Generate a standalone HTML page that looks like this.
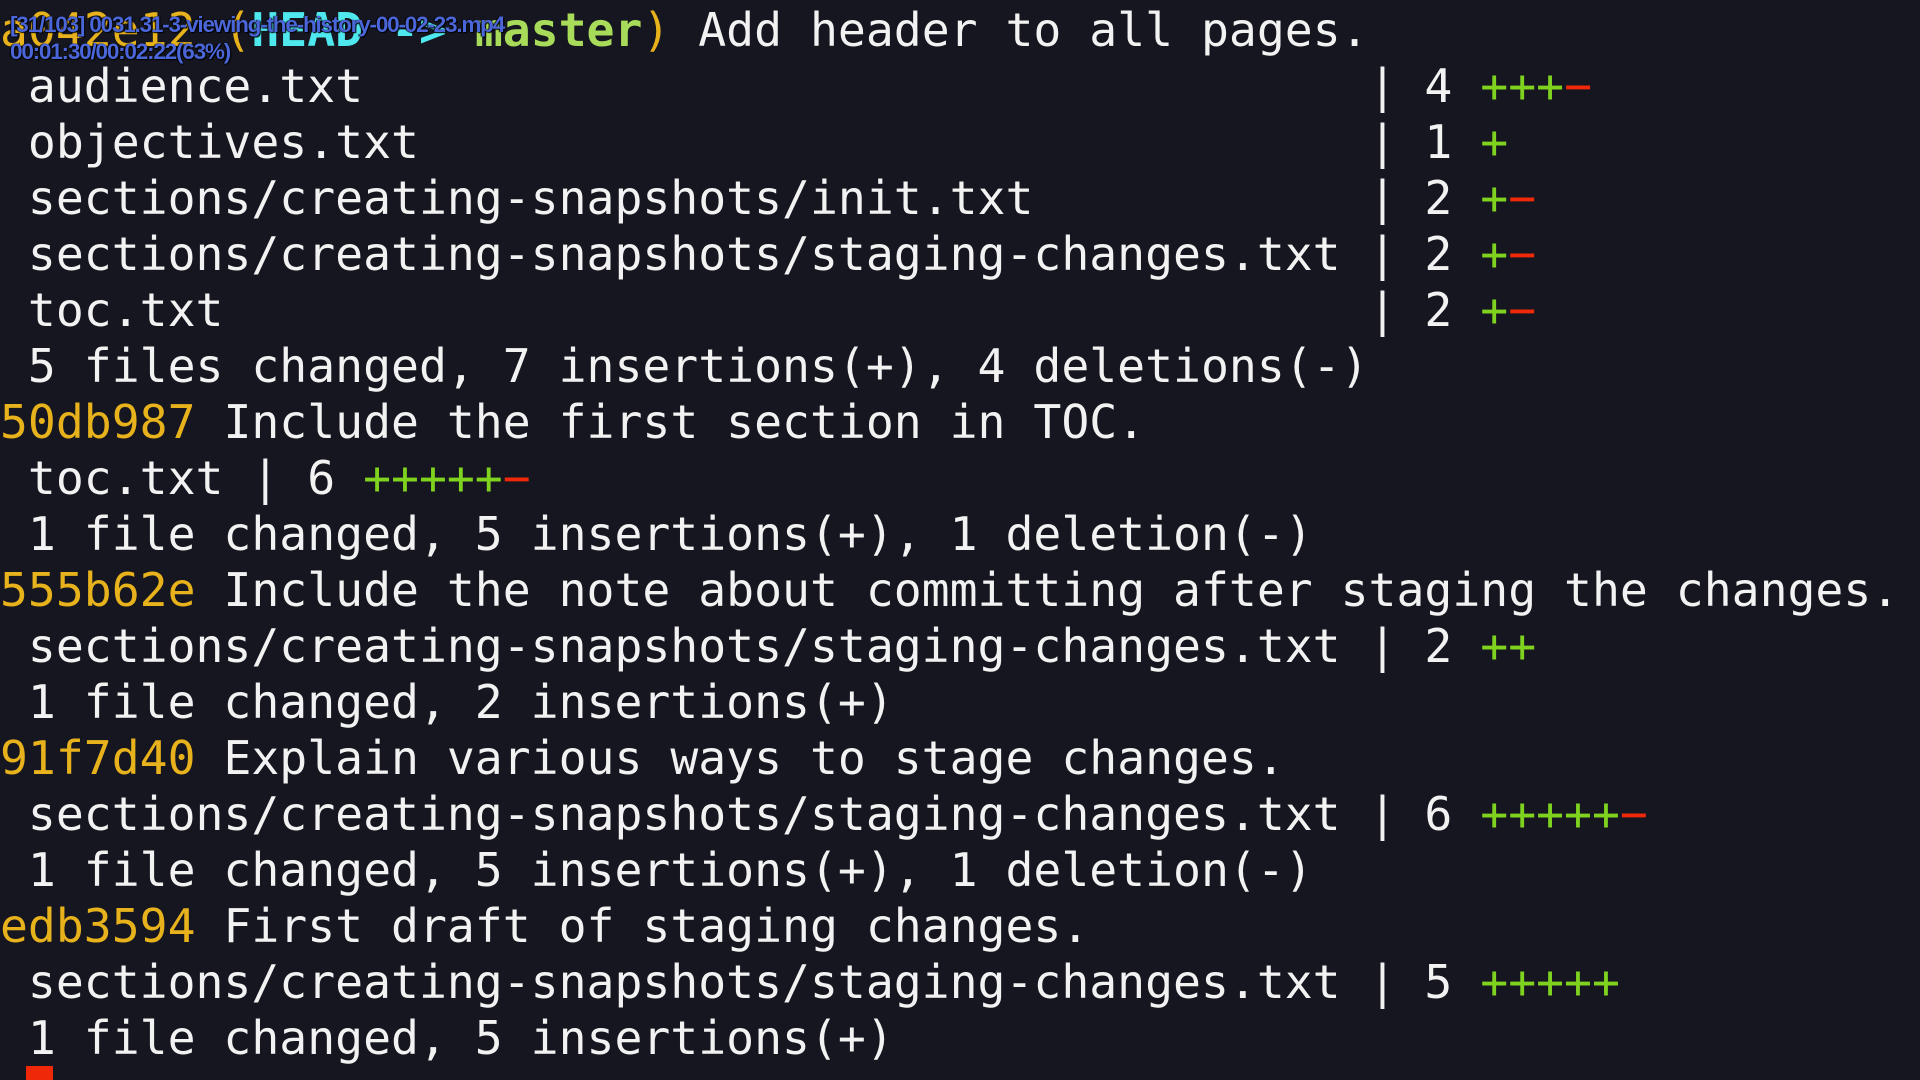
<!DOCTYPE html>
<html><head><meta charset="utf-8"><style>
html,body{margin:0;padding:0;background:#15161f;width:1920px;height:1080px;overflow:hidden}
pre{position:absolute;left:0;top:2px;margin:0;font-family:"DejaVu Sans Mono","Liberation Mono",monospace;font-size:46.4px;line-height:56px;color:#f2f2f2}
.y{color:#e7b21c}.c{color:#4fe8ee;font-weight:bold}.gb{color:#a8db5a;font-weight:bold}.r{color:#f0280a}.p{color:#7fd31e}
.ov{position:absolute;left:10px;font-family:"Liberation Sans",sans-serif;font-size:22.5px;color:#4a66d8;font-weight:bold;letter-spacing:-1.2px;text-shadow:1px 1px 1px #000,-1px 0 1px #000}
.cur{position:absolute;left:26px;top:1066px;width:27px;height:14px;background:#f0280a}
</style></head><body>
<pre><span class="y">a042e12 (</span><span class="c">HEAD -&gt; </span><span class="gb">master</span><span class="y">)</span> Add header to all pages.
 audience.txt                                    | 4 <span class="p">+++</span><span class="r">−</span>
 objectives.txt                                  | 1 <span class="p">+</span>
 sections/creating-snapshots/init.txt            | 2 <span class="p">+</span><span class="r">−</span>
 sections/creating-snapshots/staging-changes.txt | 2 <span class="p">+</span><span class="r">−</span>
 toc.txt                                         | 2 <span class="p">+</span><span class="r">−</span>
 5 files changed, 7 insertions(+), 4 deletions(-)
<span class="y">50db987</span> Include the first section in TOC.
 toc.txt | 6 <span class="p">+++++</span><span class="r">−</span>
 1 file changed, 5 insertions(+), 1 deletion(-)
<span class="y">555b62e</span> Include the note about committing after staging the changes.
 sections/creating-snapshots/staging-changes.txt | 2 <span class="p">++</span>
 1 file changed, 2 insertions(+)
<span class="y">91f7d40</span> Explain various ways to stage changes.
 sections/creating-snapshots/staging-changes.txt | 6 <span class="p">+++++</span><span class="r">−</span>
 1 file changed, 5 insertions(+), 1 deletion(-)
<span class="y">edb3594</span> First draft of staging changes.
 sections/creating-snapshots/staging-changes.txt | 5 <span class="p">+++++</span>
 1 file changed, 5 insertions(+)</pre>
<div class="ov" style="top:12px">[31/103] 0031.31-3-viewing-the-history-00-02-23.mp4</div>
<div class="ov" style="top:39px">00:01:30/00:02:22(63%)</div>
<div class="cur"></div>
</body></html>
